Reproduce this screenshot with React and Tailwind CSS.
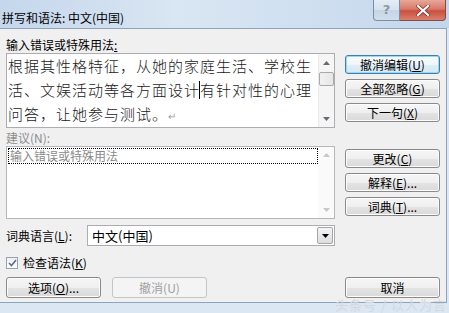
import React from "react";

const font = { fontFamily: '"Noto Sans CJK SC", "Noto Sans", sans-serif' };

function U({ children }) {
  return <span className="underline underline-offset-1">{children}</span>;
}

function Btn({ children, def, disabled, className = "" }) {
  const base =
    "h-[19px] w-[95px] rounded-[3px] border flex items-center justify-center text-[12px] leading-none";
  const look = disabled
    ? "border-[#c2c6ca] bg-[#f4f4f4] text-[#a0a0a0]"
    : def
    ? "border-[#3c7fb1] shadow-[inset_0_0_0_1px_#9ad8f0] bg-[linear-gradient(#f8fcfe_0%,#eef6fb_50%,#e0eef7_51%,#d4e8f4_100%)] text-black"
    : "border-[#8a8a8a] shadow-[inset_0_0_0_1px_#fcfcfc] bg-[linear-gradient(#f6f6f6_0%,#efefef_50%,#e4e4e4_51%,#d9d9d9_100%)] text-black";
  return <div className={`${base} ${look} ${className}`}>{children}</div>;
}

function ScrollArrow({ up, dim }) {
  return (
    <svg width="7" height="4" viewBox="0 0 7 4">
      {up ? (
        <path d="M0 4 L3.5 0 L7 4 Z" fill={dim ? "#c8c8c8" : "#6a6a6a"} />
      ) : (
        <path d="M0 0 L3.5 4 L7 0 Z" fill={dim ? "#c8c8c8" : "#6a6a6a"} />
      )}
    </svg>
  );
}

export default function App() {
  return (
    <div
      className="relative w-[449px] h-[313px] overflow-hidden bg-[#dbe7f3] flex flex-col"
      style={font}
    >
      {/* title bar */}
      <div className="h-[28px] flex items-start justify-between bg-[linear-gradient(90deg,#c5d7ec_0%,#d9e6f3_40%,#cfdff0_70%,#c3d6ec_100%)]">
        <div className="pt-[11px] pl-[2px] text-[12px] leading-[14px] text-black whitespace-nowrap">
          拼写和语法: 中文(中国)
        </div>
        <div className="flex mr-[3px]">
          <div className="w-[27px] h-[21px] rounded-bl-[4px] border border-t-0 border-[#7b8ea6] bg-[linear-gradient(#e4ecf5_0%,#d6e1ee_50%,#c6d4e4_51%,#d2deec_100%)] flex items-center justify-center text-[13px] font-bold text-[#8a97a8]" style={{ fontFamily: '"DejaVu Sans", sans-serif' }}>
            ?
          </div>
          <div className="w-[46px] h-[21px] rounded-br-[4px] border border-t-0 border-l-0 border-[#8a4a40] bg-[linear-gradient(#e8a898_0%,#d8786a_45%,#c8503e_55%,#d8806e_100%)] flex items-center justify-center">
            <svg width="14" height="11" viewBox="0 0 14 11">
              <path d="M2 1 L12 10 M12 1 L2 10" stroke="#7a2a20" strokeWidth="3.6" strokeLinecap="square" />
              <path d="M2 1 L12 10 M12 1 L2 10" stroke="#ffffff" strokeWidth="2.2" strokeLinecap="square" />
            </svg>
          </div>
        </div>
      </div>

      {/* body */}
      <div className="h-[275px] w-[447px] border-t border-r border-b border-[#8fa3bb] bg-[#f0f0f0] flex flex-col px-[6px] text-[12px] text-black">
        {/* top section */}
        <div className="flex gap-[10px]">
          {/* left */}
          <div className="w-[329px] flex flex-col">
            <div className="h-[24px] pt-[8px] leading-[15px] whitespace-nowrap">
              输入错误或特殊用法<U>:</U>
            </div>
            <div className="h-[75px] border border-[#abadb3] bg-white flex">
              <div
                className="flex-1 pl-[1px] pt-[0px] text-[15px] font-light leading-[24px] tracking-[1px] text-[#1a1a1a] whitespace-nowrap"
              >
                <div>根据其性格特征，从她的家庭生活、学校生</div>
                <div>
                  活、文娱活动等各方面设计
                  <span className="inline-block w-[1px] h-[18px] bg-black align-[-3px] -ml-[1px] mr-[0px]" />
                  有针对性的心理
                </div>
                <div>
                  问答，让她参与测试。
                  <span className="text-[10px] text-[#a0a0a0] tracking-normal">↵</span>
                </div>
              </div>
              <div className="w-[16px] bg-[#f5f5f5] border-l border-[#eaeaea] flex flex-col items-center">
                <div className="h-[18px] flex items-center justify-center">
                  <ScrollArrow up />
                </div>
                <div className="w-[15px] h-[14px] border border-[#a9a9a9] rounded-[2px] bg-[linear-gradient(90deg,#f2f2f2,#e6e6e6)]" />
                <div className="flex-1" />
                <div className="h-[16px] flex items-center justify-center">
                  <ScrollArrow />
                </div>
              </div>
            </div>
            <div className="h-[18px] pt-[2px] leading-[15px] text-[#8d8d8d] whitespace-nowrap">
              建议(N):
            </div>
            <div className="h-[73px] border border-[#b5b7bb] bg-white flex">
              <div className="flex-1 pt-[1px] pl-[1px]">
                <div className="h-[16px] border border-dotted border-black flex items-center pl-[1px] text-[#8a8a8a] leading-none">
                  输入错误或特殊用法
                </div>
              </div>
              <div className="w-[16px] bg-[#fafafa] flex flex-col items-center justify-between py-[6px]">
                <ScrollArrow up dim />
                <ScrollArrow dim />
              </div>
            </div>
          </div>
          {/* right */}
          <div className="w-[95px] flex flex-col pt-[26px]">
            <Btn def>
              撤消编辑(<U>U</U>)
            </Btn>
            <Btn className="mt-[5px]">
              全部忽略(<U>G</U>)
            </Btn>
            <Btn className="mt-[5px]">
              下一句(<U>X</U>)
            </Btn>
            <Btn className="mt-[27px]">
              更改(<U>C</U>)
            </Btn>
            <Btn className="mt-[5px]">
              解释(<U>E</U>)...
            </Btn>
            <Btn className="mt-[5px]">
              词典(<U>T</U>)...
            </Btn>
          </div>
        </div>

        {/* language row */}
        <div className="mt-[6px] flex items-center h-[21px]">
          <div className="w-[81px] whitespace-nowrap">
            词典语言(<U>L</U>):
          </div>
          <div className="w-[248px] h-[21px] border border-[#abadb3] bg-white flex items-center">
            <div className="flex-1 pl-[4px] text-[13px] leading-none">中文(中国)</div>
            <div className="w-[16px] h-[17px] mr-[1px] border border-[#a6a6a6] rounded-[2px] bg-[linear-gradient(#f4f4f4,#dedede)] flex items-center justify-center">
              <svg width="7" height="4" viewBox="0 0 7 4">
                <path d="M0 0 L3.5 4 L7 0 Z" fill="#000" />
              </svg>
            </div>
          </div>
        </div>

        {/* checkbox row */}
        <div className="mt-[10px] h-[14px] flex items-center gap-[5px]">
          <div className="w-[12px] h-[12px] border border-[#9aa3ad] bg-[linear-gradient(#eef1f4,#fdfdfd)] flex items-center justify-center">
            <svg width="9" height="8" viewBox="0 0 9 8">
              <path d="M1 4 L3.5 6.5 L8 1" stroke="#5d6e86" strokeWidth="1.6" fill="none" />
            </svg>
          </div>
          <div className="whitespace-nowrap leading-none">
            检查语法(<U>K</U>)
          </div>
        </div>

        {/* buttons row */}
        <div className="mt-[7px] flex items-center">
          <Btn className="w-[76px] h-[21px]">
            选项(<U>O</U>)...
          </Btn>
          <Btn disabled className="ml-[11px] w-[73px] h-[21px]">
            撤消(U)
          </Btn>
          <div className="flex-1" />
          <Btn className="h-[21px] mr-[0px]">取消</Btn>
        </div>
      </div>

      <div className="absolute right-[2px] bottom-[2px] text-[13px] leading-none text-[#d4d8de] whitespace-nowrap tracking-[1px]">
        头条号 / 以人为言
      </div>
    </div>
  );
}
